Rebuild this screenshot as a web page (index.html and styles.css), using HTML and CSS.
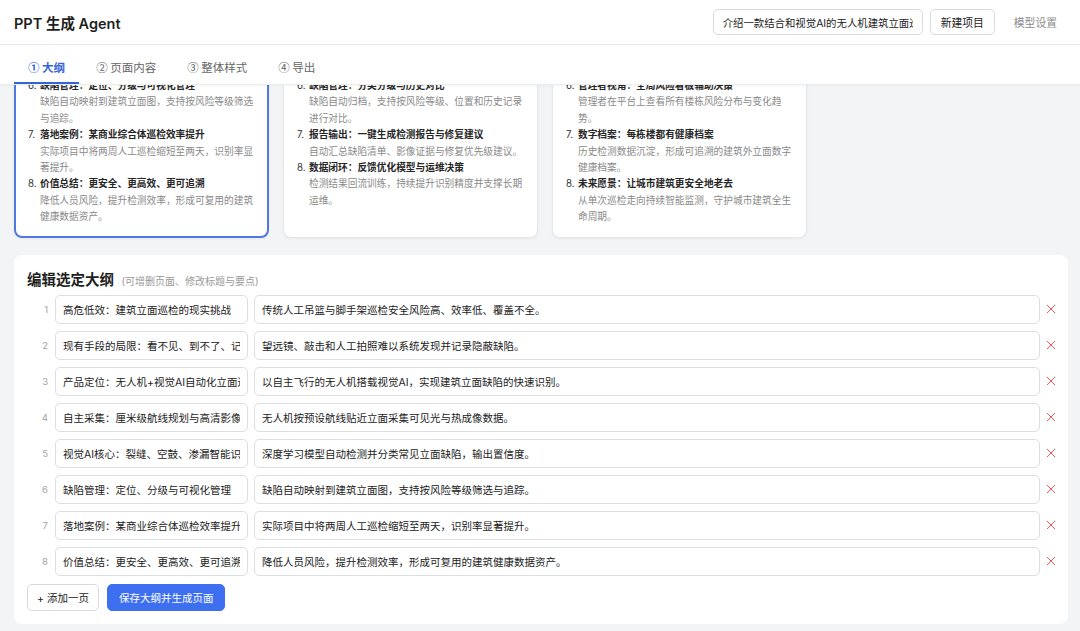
FILE: index.html
```html
<!DOCTYPE html>
<html lang="zh-CN">
<head>
    <meta charset="UTF-8">
    <meta name="viewport" content="width=device-width, initial-scale=1.0">
    <title>PPT 生成 Agent</title>
    <link rel="stylesheet" href="styles.css">
</head>
<body>
    <header class="topbar">
        <div class="brand">PPT 生成 Agent</div>
        <div class="topbar-actions">
            <input class="topic-input" type="text" value="介绍一款结合和视觉AI的无人机建筑立面巡检系统">
            <button class="btn">新建项目</button>
            <a href="#" class="link-muted">模型设置</a>
        </div>
    </header>

    <nav class="steps">
        <div class="step active">① 大纲</div>
        <div class="step">② 页面内容</div>
        <div class="step">③ 整体样式</div>
        <div class="step">④ 导出</div>
    </nav>

    <main class="workspace">
        <div class="outline-cards">
            <div class="outline-card selected">
                <div class="item">
                    <span class="num">6.</span>
                    <div class="item-body">
                        <div class="item-title">缺陷管理：定位、分级与可视化管理</div>
                        <div class="item-desc">缺陷自动映射到建筑立面图，支持按风险等级筛选与追踪。</div>
                    </div>
                </div>
                <div class="item">
                    <span class="num">7.</span>
                    <div class="item-body">
                        <div class="item-title">落地案例：某商业综合体巡检效率提升</div>
                        <div class="item-desc">实际项目中将两周人工巡检缩短至两天，识别率显著提升。</div>
                    </div>
                </div>
                <div class="item">
                    <span class="num">8.</span>
                    <div class="item-body">
                        <div class="item-title">价值总结：更安全、更高效、更可追溯</div>
                        <div class="item-desc">降低人员风险，提升检测效率，形成可复用的建筑健康数据资产。</div>
                    </div>
                </div>
            </div>
            <div class="outline-card">
                <div class="item">
                    <span class="num">6.</span>
                    <div class="item-body">
                        <div class="item-title">缺陷管理：分类分级与历史对比</div>
                        <div class="item-desc">缺陷自动归档，支持按风险等级、位置和历史记录进行对比。</div>
                    </div>
                </div>
                <div class="item">
                    <span class="num">7.</span>
                    <div class="item-body">
                        <div class="item-title">报告输出：一键生成检测报告与修复建议</div>
                        <div class="item-desc">自动汇总缺陷清单、影像证据与修复优先级建议。</div>
                    </div>
                </div>
                <div class="item">
                    <span class="num">8.</span>
                    <div class="item-body">
                        <div class="item-title">数据闭环：反馈优化模型与运维决策</div>
                        <div class="item-desc">检测结果回流训练，持续提升识别精度并支撑长期运维。</div>
                    </div>
                </div>
            </div>
            <div class="outline-card">
                <div class="item">
                    <span class="num">6.</span>
                    <div class="item-body">
                        <div class="item-title">管理者视角：全局风险看板辅助决策</div>
                        <div class="item-desc">管理者在平台上查看所有楼栋风险分布与变化趋势。</div>
                    </div>
                </div>
                <div class="item">
                    <span class="num">7.</span>
                    <div class="item-body">
                        <div class="item-title">数字档案：每栋楼都有健康档案</div>
                        <div class="item-desc">历史检测数据沉淀，形成可追溯的建筑外立面数字健康档案。</div>
                    </div>
                </div>
                <div class="item">
                    <span class="num">8.</span>
                    <div class="item-body">
                        <div class="item-title">未来愿景：让城市建筑更安全地老去</div>
                        <div class="item-desc">从单次巡检走向持续智能监测，守护城市建筑全生命周期。</div>
                    </div>
                </div>
            </div>
        </div>

        <section class="editor">
            <h2 class="editor-title">编辑选定大纲 <span class="hint">(可增删页面、修改标题与要点)</span></h2>

            <div class="rows">
                <div class="row">
                    <span class="row-num">1</span>
                    <input class="field field-title" type="text" value="高危低效：建筑立面巡检的现实挑战">
                    <input class="field field-text" type="text" value="传统人工吊篮与脚手架巡检安全风险高、效率低、覆盖不全。">
                    <button class="remove"><svg viewBox="0 0 10 10"><path d="M1 1L9 9M9 1L1 9"/></svg></button>
                </div>
                <div class="row">
                    <span class="row-num">2</span>
                    <input class="field field-title" type="text" value="现有手段的局限：看不见、到不了、记不全">
                    <input class="field field-text" type="text" value="望远镜、敲击和人工拍照难以系统发现并记录隐蔽缺陷。">
                    <button class="remove"><svg viewBox="0 0 10 10"><path d="M1 1L9 9M9 1L1 9"/></svg></button>
                </div>
                <div class="row">
                    <span class="row-num">3</span>
                    <input class="field field-title" type="text" value="产品定位：无人机+视觉AI自动化立面巡检">
                    <input class="field field-text" type="text" value="以自主飞行的无人机搭载视觉AI，实现建筑立面缺陷的快速识别。">
                    <button class="remove"><svg viewBox="0 0 10 10"><path d="M1 1L9 9M9 1L1 9"/></svg></button>
                </div>
                <div class="row">
                    <span class="row-num">4</span>
                    <input class="field field-title" type="text" value="自主采集：厘米级航线规划与高清影像">
                    <input class="field field-text" type="text" value="无人机按预设航线贴近立面采集可见光与热成像数据。">
                    <button class="remove"><svg viewBox="0 0 10 10"><path d="M1 1L9 9M9 1L1 9"/></svg></button>
                </div>
                <div class="row">
                    <span class="row-num">5</span>
                    <input class="field field-title" type="text" value="视觉AI核心：裂缝、空鼓、渗漏智能识别">
                    <input class="field field-text" type="text" value="深度学习模型自动检测并分类常见立面缺陷，输出置信度。">
                    <button class="remove"><svg viewBox="0 0 10 10"><path d="M1 1L9 9M9 1L1 9"/></svg></button>
                </div>
                <div class="row">
                    <span class="row-num">6</span>
                    <input class="field field-title" type="text" value="缺陷管理：定位、分级与可视化管理">
                    <input class="field field-text" type="text" value="缺陷自动映射到建筑立面图，支持按风险等级筛选与追踪。">
                    <button class="remove"><svg viewBox="0 0 10 10"><path d="M1 1L9 9M9 1L1 9"/></svg></button>
                </div>
                <div class="row">
                    <span class="row-num">7</span>
                    <input class="field field-title" type="text" value="落地案例：某商业综合体巡检效率提升">
                    <input class="field field-text" type="text" value="实际项目中将两周人工巡检缩短至两天，识别率显著提升。">
                    <button class="remove"><svg viewBox="0 0 10 10"><path d="M1 1L9 9M9 1L1 9"/></svg></button>
                </div>
                <div class="row">
                    <span class="row-num">8</span>
                    <input class="field field-title" type="text" value="价值总结：更安全、更高效、更可追溯">
                    <input class="field field-text" type="text" value="降低人员风险，提升检测效率，形成可复用的建筑健康数据资产。">
                    <button class="remove"><svg viewBox="0 0 10 10"><path d="M1 1L9 9M9 1L1 9"/></svg></button>
                </div>
            </div>

            <div class="editor-actions">
                <button class="btn btn-add">+ 添加一页</button>
                <button class="btn btn-primary">保存大纲并生成页面</button>
            </div>
        </section>
    </main>
</body>
</html>
```

FILE: styles.css
```css
body {
    margin: 0;
    height: 631px;
    overflow: hidden;
    background-color: #f3f4f6;
    font-family: "Inter", "Noto Sans CJK SC", sans-serif;
    color: #222;
}

button,
input {
    font-family: inherit;
}

/* top bar */
.topbar {
    height: 44px;
    display: flex;
    align-items: center;
    justify-content: space-between;
    padding: 0 23px 0 14px;
    background-color: #fff;
    border-bottom: 1px solid #ebebeb;
}

.brand {
    font-size: 14.5px;
    font-weight: 600;
    color: #1f1f1f;
}

.topbar-actions {
    display: flex;
    align-items: center;
}

.topic-input {
    width: 210px;
    height: 26px;
    box-sizing: border-box;
    padding: 0 9px;
    border: 1px solid #d9d9d9;
    border-radius: 5px;
    font-size: 10.4px;
    color: #222;
    outline: none;
}

.topbar-actions .btn {
    margin-left: 7px;
    height: 26px;
    padding: 0 10px;
    font-size: 10.8px;
}

.link-muted {
    margin-left: 19px;
    font-size: 10.8px;
    color: #8c8c8c;
    text-decoration: none;
}

/* step tabs */
.steps {
    position: relative;
    z-index: 2;
    display: flex;
    gap: 3px;
    height: 39px;
    padding: 0 14px;
    background-color: #fff;
    border-bottom: 1px solid #ececec;
    box-shadow: 0 1px 3px rgba(0, 0, 0, 0.04);
    font-family: "Noto Sans CJK SC", sans-serif;
}

.step {
    display: flex;
    align-items: center;
    padding: 6px 14px 0;
    font-size: 11.5px;
    color: #666;
    border-bottom: 2px solid transparent;
}

.step.active {
    color: #3563d8;
    font-weight: 600;
    border-bottom-color: #3563d8;
}

/* outline candidates (scrolled under the tabs) */
.workspace {
    padding: 0 12px 0 14px;
}

.outline-cards {
    display: flex;
    gap: 14px;
    margin-top: -18px;
}

.outline-card {
    width: 255px;
    box-sizing: border-box;
    padding: 10px 14px 11px 13px;
    background-color: #fff;
    border: 1px solid #e6e7ea;
    border-radius: 8px;
    box-shadow: 0 1px 3px rgba(0, 0, 0, 0.05);
}

.outline-card.selected {
    padding: 9px 13px 10px 12px;
    border: 2px solid #5078de;
}

.item {
    display: flex;
    font-size: 9.7px;
    line-height: 16.4px;
}

.num {
    width: 12px;
    flex-shrink: 0;
    color: #333;
}

.item-title {
    font-weight: 600;
    color: #262626;
}

.item-desc {
    color: #8a8a8a;
}

/* editor panel */
.editor {
    margin-top: 17px;
    padding: 15px 12px 13px 13px;
    background-color: #fff;
    border-radius: 8px;
}

.editor-title {
    margin: 0 0 4px;
    font-size: 14.5px;
    line-height: 19px;
    font-weight: 700;
    color: #1f1f1f;
}

.hint {
    margin-left: 4px;
    font-size: 10px;
    font-weight: 400;
    color: #9a9a9a;
}

.rows {
    display: flex;
    flex-direction: column;
    gap: 7px;
}

.row {
    display: flex;
    align-items: center;
    gap: 6px;
}

.row-num {
    width: 21px;
    flex-shrink: 0;
    text-align: right;
    font-size: 9.5px;
    color: #a3a3a3;
    margin-right: 1px;
}

.field {
    height: 29px;
    box-sizing: border-box;
    padding: 0 7px;
    border: 1px solid #dcdee2;
    border-radius: 5px;
    font-size: 10.5px;
    color: #222;
    background-color: #fff;
    outline: none;
}

.field-title {
    width: 193px;
    flex-shrink: 0;
}

.field-text {
    flex: 1;
    min-width: 0;
}

.remove {
    width: 10px;
    height: 16px;
    padding: 0;
    border: none;
    background: none;
    display: flex;
    align-items: center;
    justify-content: center;
}

.remove svg {
    width: 10px;
    height: 10px;
    fill: none;
    stroke: #e25b58;
    stroke-width: 1;
}

.editor-actions {
    display: flex;
    gap: 8px;
    margin-top: 8px;
}

/* buttons */
.btn {
    height: 27px;
    padding: 0 11px;
    border: 1px solid #d9d9d9;
    border-radius: 5px;
    background-color: #fff;
    font-size: 10.5px;
    color: #222;
    cursor: pointer;
}

.btn-add {
    padding: 0 9px;
}

.btn-primary {
    border-color: #3d6ff0;
    background-color: #3d6ff0;
    color: #fff;
}
```
